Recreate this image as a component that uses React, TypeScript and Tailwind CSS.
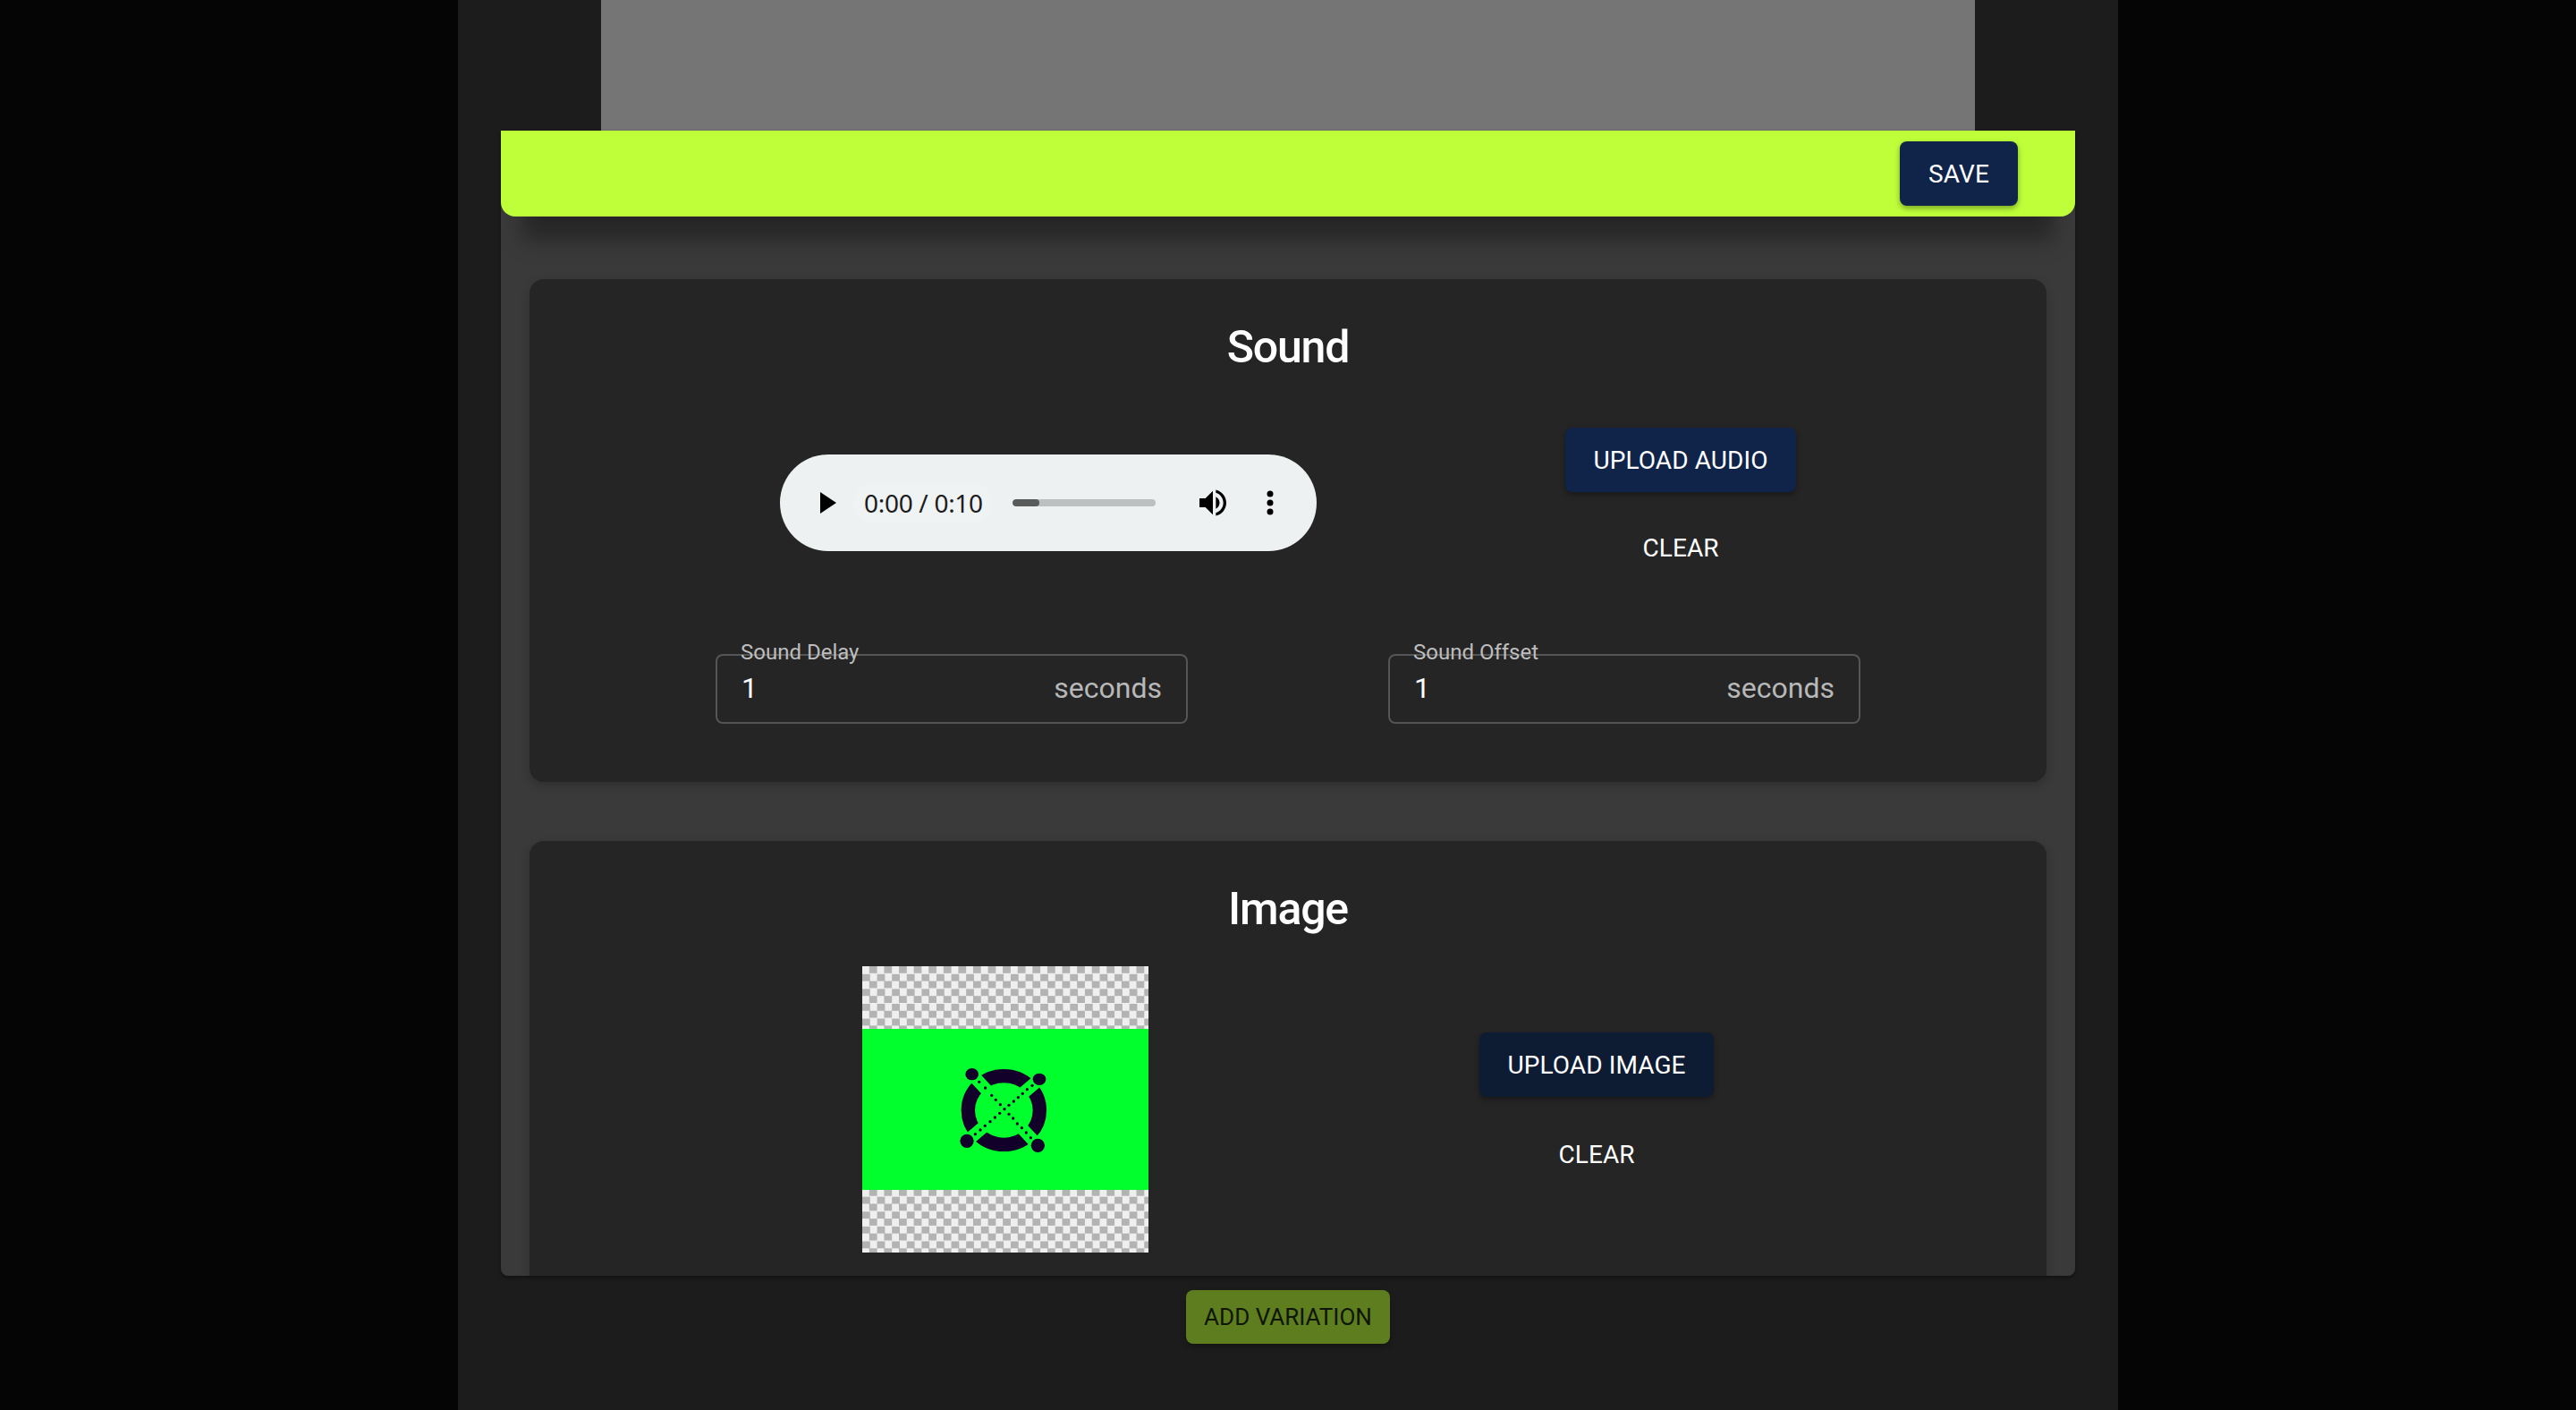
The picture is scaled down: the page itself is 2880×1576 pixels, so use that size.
import React from "react";

const font = "font-['Roboto',sans-serif]";

function PrimaryButton({ children, className = "" }: { children: React.ReactNode; className?: string }) {
  return (
    <button className={`flex h-[72px] items-center justify-center rounded-lg pt-px text-[28px] font-normal uppercase tracking-[0.1px] text-white shadow-[0_3px_6px_rgba(0,0,0,0.35)] ${className}`}>
      {children}
    </button>
  );
}

function ClearButton() {
  return <button className="flex h-[72px] items-center justify-center pt-px text-[28px] font-normal uppercase tracking-[0.1px] text-white">Clear</button>;
}

function AudioPlayer() {
  return (
    <div className="mb-[2px] flex h-[108px] w-[600px] items-center rounded-[54px] bg-[#eef1f2]">
      <svg className="ml-[45px] h-6 w-[18px]" viewBox="0 0 18 24">
        <path d="M0 0 18 12 0 24Z" fill="#000" />
      </svg>
      <span className="ml-[19px] flex h-[45px] w-[155px] items-center whitespace-nowrap rounded-3xl bg-[#f0f3f4] px-3 font-['Noto_Sans',sans-serif] text-[28px] leading-none tracking-[-0.3px] text-[#1c1c1c]">0:00 / 0:10</span>
      <div className="ml-[23px] h-2 w-40 overflow-hidden rounded bg-[#bcc0c0]">
        <div className="h-full w-[30px] rounded bg-[#5a5c5c]" />
      </div>
      <svg className="ml-[44px] h-10 w-10" viewBox="0 0 24 24">
        <path
          d="M3 9v6h4l5 5V4L7 9H3zm13.5 3c0-1.77-1.02-3.29-2.5-4.03v8.05c1.48-.73 2.5-2.25 2.5-4.02zM14 3.23v2.06c2.89.86 5 3.54 5 6.71s-2.11 5.85-5 6.71v2.06c4.01-.91 7-4.49 7-8.77s-2.99-7.86-7-8.77z"
          fill="#000"
        />
      </svg>
      <svg className="ml-[40px] h-10 w-2" viewBox="0 0 8 40">
        <circle cx="4" cy="10" r="3.5" fill="#000" />
        <circle cx="4" cy="20" r="3.5" fill="#000" />
        <circle cx="4" cy="30" r="3.5" fill="#000" />
      </svg>
    </div>
  );
}

function SecondsField({ label }: { label: string }) {
  return (
    <div className="relative flex h-[78px] w-[528px] items-center justify-between rounded-lg border-2 border-[#555555] px-[27px] pb-[2px]">
      <span className="absolute left-[26px] top-[-18px] text-2xl leading-7 text-[#bdbdbd]">{label}</span>
      <span className="text-[32px] text-white">1</span>
      <span className="text-[32px] text-[#b8b8b8]">seconds</span>
    </div>
  );
}

// dot positions read off the logo, in viewBox units
const logoDots = [
  [167, 118], [188, 138], [209, 163], [223, 178], [238, 194], [252, 209], [267, 226], [281, 240], [295, 258], [310, 272], [325, 288], [340, 305],
  [345, 130], [328, 143], [313, 157], [298, 170], [283, 183], [267, 196], [236, 223], [220, 237], [204, 251], [187, 265], [171, 279], [154, 293],
];

function ElementLogo() {
  return (
    <svg className="mb-[10px] h-[130px] w-[170px]" viewBox="0 0 510 390">
      <ellipse cx="250" cy="213" rx="120" ry="115" fill="none" stroke="#12002a" strokeWidth="46" />
      <path d="M143 92 364 331M369 109 126 316" stroke="#00ff2c" strokeWidth="42" />
      <ellipse cx="143" cy="92" rx="22" ry="20" fill="#12002a" />
      <ellipse cx="369" cy="109" rx="22" ry="20" fill="#12002a" />
      <ellipse cx="126" cy="316" rx="23" ry="23" fill="#12002a" />
      <ellipse cx="364" cy="331" rx="23" ry="23" fill="#12002a" />
      {logoDots.map(([x, y]) => (
        <circle key={`${x}-${y}`} cx={x} cy={y} r="5" fill="#12002a" />
      ))}
    </svg>
  );
}

function ImagePreview() {
  return (
    <div className="flex h-80 w-80 shrink-0 items-center justify-center bg-[conic-gradient(#b3b3b3_25%,#efefef_0_50%,#b3b3b3_0_75%,#efefef_0)] bg-[length:16.6px_16.6px]">
      <div className="flex h-[180px] w-80 items-center justify-center bg-[#00ff2c]">
        <ElementLogo />
      </div>
    </div>
  );
}

export default function App() {
  return (
    <div className={`flex h-[1576px] justify-center overflow-hidden bg-[#050505] ${font}`}>
      <div className="flex w-[1856px] flex-col items-center bg-[#1c1c1c]">
        <div className="h-[146px] w-[1536px] shrink-0 bg-[#757575]" />

        <div className="flex h-[1280px] w-[1760px] shrink-0 flex-col overflow-hidden rounded-b-lg bg-[#3a3a3a] shadow-[0_2px_4px_rgba(0,0,0,0.4)]">
          <div className="z-10 flex h-24 shrink-0 items-center justify-end rounded-b-2xl bg-[#beff3a] pr-16 shadow-[0_50px_24px_-24px_rgba(0,0,0,0.35)]">
            <PrimaryButton className="w-[132px] bg-[#10244a]">Save</PrimaryButton>
          </div>

          <div className="flex flex-col gap-[66px] px-8 pt-[70px]">
            <section className="flex h-[562px] shrink-0 flex-col rounded-2xl bg-[#252525] pt-12 shadow-[0_4px_12px_rgba(0,0,0,0.2)]">
              <h2 className="text-center text-[50px] leading-14 font-medium tracking-[-1.2px] text-white">Sound</h2>
              <div className="mt-[62px] flex items-center gap-[278px] pl-[280px]">
                <AudioPlayer />
                <div className="flex w-[258px] flex-col gap-[26px]">
                  <PrimaryButton className="bg-[#10244a]">Upload Audio</PrimaryButton>
                  <ClearButton />
                </div>
              </div>
              <div className="mt-[83px] flex justify-between px-52">
                <SecondsField label="Sound Delay" />
                <SecondsField label="Sound Offset" />
              </div>
            </section>

            <section className="flex h-[562px] shrink-0 flex-col rounded-2xl bg-[#252525] pt-12 shadow-[0_4px_12px_rgba(0,0,0,0.2)]">
              <h2 className="text-center text-[50px] leading-14 font-medium tracking-[-1.2px] text-white">Image</h2>
              <div className="mt-9 flex items-center gap-[370px] pl-[372px]">
                <ImagePreview />
                <div className="flex w-[262px] flex-col gap-7">
                  <PrimaryButton className="bg-[#0d1b33]">Upload Image</PrimaryButton>
                  <ClearButton />
                </div>
              </div>
            </section>
          </div>
        </div>

        <button className="mt-4 flex h-[60px] w-[228px] shrink-0 items-center justify-center rounded-lg bg-[#5e7d1e] text-[26px] font-normal uppercase text-[#0e1505] shadow-[0_3px_6px_rgba(0,0,0,0.3)]">
          Add Variation
        </button>
      </div>
    </div>
  );
}
